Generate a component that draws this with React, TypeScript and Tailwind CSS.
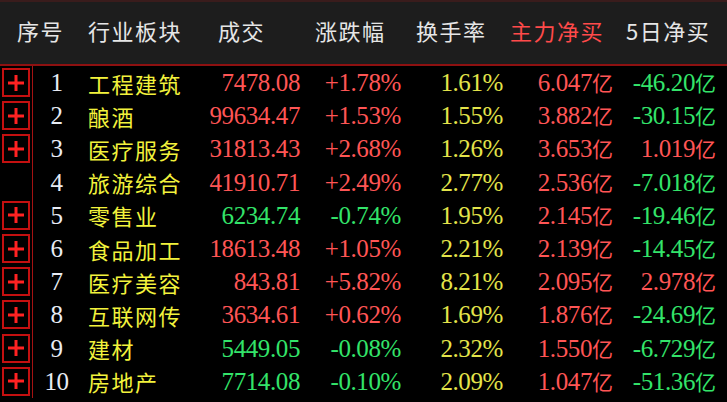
import React from 'react'

type Row = {
  no: number
  name: string
  amount: string
  change: string
  turnover: string
  main: string
  five: string
  plus: boolean
}

const rows: Row[] = [
  { no: 1, name: '工程建筑', amount: '7478.08', change: '+1.78%', turnover: '1.61%', main: '6.047', five: '-46.20', plus: true },
  { no: 2, name: '酿酒', amount: '99634.47', change: '+1.53%', turnover: '1.55%', main: '3.882', five: '-30.15', plus: true },
  { no: 3, name: '医疗服务', amount: '31813.43', change: '+2.68%', turnover: '1.26%', main: '3.653', five: '1.019', plus: true },
  { no: 4, name: '旅游综合', amount: '41910.71', change: '+2.49%', turnover: '2.77%', main: '2.536', five: '-7.018', plus: false },
  { no: 5, name: '零售业', amount: '6234.74', change: '-0.74%', turnover: '1.95%', main: '2.145', five: '-19.46', plus: true },
  { no: 6, name: '食品加工', amount: '18613.48', change: '+1.05%', turnover: '2.21%', main: '2.139', five: '-14.45', plus: true },
  { no: 7, name: '医疗美容', amount: '843.81', change: '+5.82%', turnover: '8.21%', main: '2.095', five: '2.978', plus: true },
  { no: 8, name: '互联网传', amount: '3634.61', change: '+0.62%', turnover: '1.69%', main: '1.876', five: '-24.69', plus: true },
  { no: 9, name: '建材', amount: '5449.05', change: '-0.08%', turnover: '2.32%', main: '1.550', five: '-6.729', plus: true },
  { no: 10, name: '房地产', amount: '7714.08', change: '-0.10%', turnover: '2.09%', main: '1.047', five: '-51.36', plus: true },
]

const cols = 'grid grid-cols-[33px_47px_120px_100px_101px_102px_110px_103px_1fr]'
const num = "font-['Liberation_Serif',serif] text-[25px] tracking-[-0.4px] leading-none"
const cjk = "font-['Noto_Sans_CJK_SC',sans-serif]"

const red = 'text-[#ff5555]'
const green = 'text-[#33e46a]'

const PlusBox = () => (
  <div className="w-[28px] h-[29px] border-2 border-[#c41010] flex items-center justify-center">
    <svg width="16" height="16" viewBox="0 0 16 16">
      <rect x="6.5" y="0" width="3" height="16" fill="#ff2222" />
      <rect x="0" y="6.5" width="16" height="3" fill="#ff2222" />
    </svg>
  </div>
)

const Yi = () => <span className={`${cjk} text-[21px] tracking-normal`}>亿</span>

export default function App() {
  return (
    <div className={`w-[727px] h-[402px] bg-black overflow-hidden flex flex-col ${cjk}`}>
      <div className={`${cols} h-[66px] pb-[5px] bg-[#1d1d1d] border-t-2 border-[#3a1c1c] border-b-2 border-b-[#8e1111] items-center text-[22px] tracking-[1.5px] text-[#e6e6e6]`}>
        <div className="col-span-2 pl-[17px]">序号</div>
        <div className="pl-[8px]">行业板块</div>
        <div className="pl-[18px]">成交</div>
        <div className="pl-[15px]">涨跌幅</div>
        <div className="pl-[15px]">换手率</div>
        <div className="pl-[7px] text-[#ff4a4a]">主力净买</div>
        <div className="pl-[13px]">5日净买</div>
        <div />
      </div>

      <div className="flex-1 flex flex-col">
        {rows.map((r) => {
          const up = r.change.startsWith('+')
          const fiveUp = !r.five.startsWith('-')
          return (
            <div key={r.no} className={`${cols} h-[33.2px] items-center`}>
              <div className="h-full border-r-[1.5px] border-[#a51212] flex items-center pl-[2px]">
                {r.plus && <PlusBox />}
              </div>
              <div className={`${num} text-center text-[#e8ecf4]`}>{r.no}</div>
              <div className="pl-[8px] text-[22px] tracking-[1.5px] text-[#f2f23c] leading-none">{r.name}</div>
              <div className={`${num} text-right ${up ? red : green}`}>{r.amount}</div>
              <div className={`${num} text-right ${up ? red : green}`}>{r.change}</div>
              <div className={`${num} text-right text-[#e4e44a]`}>{r.turnover}</div>
              <div className={`${num} text-right ${red}`}>
                {r.main}
                <Yi />
              </div>
              <div className={`${num} text-right ${fiveUp ? red : green}`}>
                {r.five}
                <Yi />
              </div>
              <div />
            </div>
          )
        })}
      </div>
    </div>
  )
}
